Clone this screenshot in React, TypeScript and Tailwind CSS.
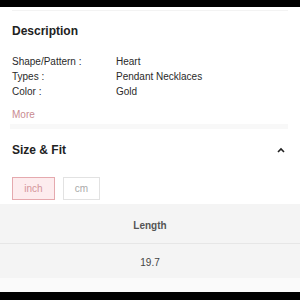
export default function App() {
  const rows = [
    ["Shape/Pattern :", "Heart"],
    ["Types :", "Pendant Necklaces"],
    ["Color :", "Gold"],
  ];
  return (
    <div
      className="w-[300px] h-[300px] bg-white flex flex-col overflow-hidden"
      style={{ fontFamily: '"Liberation Sans", Arial, sans-serif' }}
    >
      <div className="h-[7px] bg-black shrink-0" />
      <div className="h-[3px] shrink-0" />
      <div className="h-px bg-[#f3f3f3] mx-[12px] shrink-0" />
      <div className="px-[12px] pt-[12px] shrink-0">
        <div className="text-[12px] leading-[16px] font-bold text-[#222]">Description</div>
        <div className="mt-[15px] flex flex-col">
          {rows.map(([k, v]) => (
            <div key={k} className="flex text-[10px] leading-[15px] text-[#2a2a2a]">
              <div className="w-[104px]">{k}</div>
              <div>{v}</div>
            </div>
          ))}
        </div>
        <div className="mt-[8px] text-[10px] leading-[15px] text-[#c98a90]">More</div>
      </div>
      <div className="mt-[2px] h-[5px] bg-[#f8f8f8] ml-[10px] mr-[12px] shrink-0" />
      <div className="px-[12px] pt-[13px] shrink-0">
        <div className="flex items-center justify-between">
          <div className="text-[12px] leading-[16px] font-bold text-[#222]">Size &amp; Fit</div>
          <svg width="10" height="8" viewBox="0 0 10 8" className="mr-[2px]">
            <path d="M2 6 L5 3 L8 6" fill="none" stroke="#222" strokeWidth="1.6" />
          </svg>
        </div>
        <div className="mt-[19px] flex gap-[8px]">
          <div className="w-[43px] h-[23px] border border-[#e5a9ae] bg-[#fdecee] text-[#d4959b] text-[10px] flex items-center justify-center">
            inch
          </div>
          <div className="w-[37px] h-[23px] border border-[#e2e2e2] bg-white text-[#aaa] text-[10px] flex items-center justify-center">
            cm
          </div>
        </div>
      </div>
      <div className="mt-[4px] bg-[#f4f4f4] shrink-0">
        <div className="h-[39px] pt-[3px] flex items-center justify-center text-[10px] font-bold text-[#555]">
          Length
        </div>
        <div className="h-px bg-[#e6e6e6]" />
        <div className="h-[34px] pt-[3px] flex items-center justify-center text-[10px] text-[#444]">19.7</div>
      </div>
      <div className="h-[14px] bg-[#fafafa] shrink-0" />
      <div className="flex-1 bg-black" />
    </div>
  );
}
